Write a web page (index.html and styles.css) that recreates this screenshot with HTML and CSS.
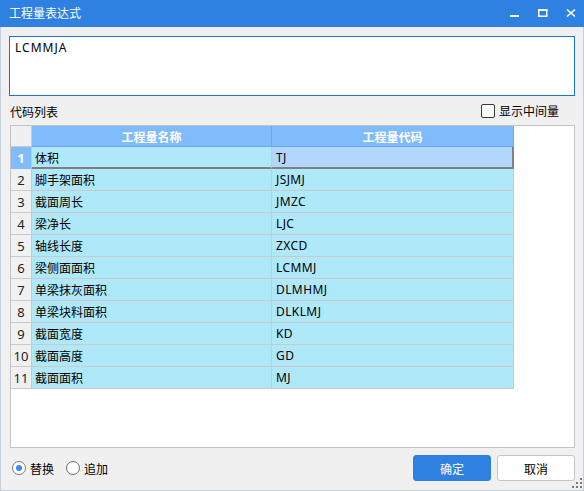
FILE: index.html
```html
<!DOCTYPE html>
<html>
<head>
<meta charset="utf-8">
<link rel="stylesheet" href="styles.css">
</head>
<body>
<div class="window">
  <div class="titlebar">
    <span class="title">工程量表达式</span>
    <div class="controls">
      <span class="ctl"><svg width="10" height="10" viewBox="0 0 10 10"><rect x="0" y="7" width="9" height="2" fill="#fff"/></svg></span>
      <span class="ctl"><svg width="10" height="10" viewBox="0 0 10 10"><rect x="0.75" y="1.75" width="8" height="6.5" fill="none" stroke="#fff" stroke-width="1.5"/><rect x="0" y="1" width="9.5" height="2" fill="#fff"/></svg></span>
      <span class="ctl"><svg width="10" height="10" viewBox="0 0 10 10"><path d="M1 1.5L9 8.5M9 1.5L1 8.5" stroke="#fff" stroke-width="1.6"/></svg></span>
    </div>
  </div>
  <div class="body">
    <div class="expr">LCMMJA</div>
    <div class="labelrow">
      <span class="label">代码列表</span>
      <label class="check"><span class="box"></span><span>显示中间量</span></label>
    </div>
    <div class="grid">
      <div class="row head">
        <div class="c num"></div>
        <div class="c name">工程量名称</div>
        <div class="c code">工程量代码</div>
      </div>
      <div class="row sel">
        <div class="c num">1</div>
        <div class="c name">体积</div>
        <div class="c code">TJ</div>
      </div>
      <div class="row"><div class="c num">2</div><div class="c name">脚手架面积</div><div class="c code">JSJMJ</div></div>
      <div class="row"><div class="c num">3</div><div class="c name">截面周长</div><div class="c code">JMZC</div></div>
      <div class="row"><div class="c num">4</div><div class="c name">梁净长</div><div class="c code">LJC</div></div>
      <div class="row"><div class="c num">5</div><div class="c name">轴线长度</div><div class="c code">ZXCD</div></div>
      <div class="row"><div class="c num">6</div><div class="c name">梁侧面面积</div><div class="c code">LCMMJ</div></div>
      <div class="row"><div class="c num">7</div><div class="c name">单梁抹灰面积</div><div class="c code">DLMHMJ</div></div>
      <div class="row"><div class="c num">8</div><div class="c name">单梁块料面积</div><div class="c code">DLKLMJ</div></div>
      <div class="row"><div class="c num">9</div><div class="c name">截面宽度</div><div class="c code">KD</div></div>
      <div class="row"><div class="c num">10</div><div class="c name">截面高度</div><div class="c code">GD</div></div>
      <div class="row"><div class="c num">11</div><div class="c name">截面面积</div><div class="c code">MJ</div></div>
    </div>
    <div class="footer">
      <label class="radio"><span class="dot on"></span><span>替换</span></label>
      <label class="radio"><span class="dot"></span><span>追加</span></label>
      <div class="buttons">
        <button class="btn primary">确定</button>
        <button class="btn">取消</button>
      </div>
    </div>
    <svg class="grip" width="11" height="11" viewBox="0 0 11 11">
      <rect x="8" y="0" width="2" height="2" fill="#7a7a7a"/>
      <rect x="4" y="4" width="2" height="2" fill="#7a7a7a"/>
      <rect x="8" y="4" width="2" height="2" fill="#7a7a7a"/>
      <rect x="0" y="8" width="2" height="2" fill="#7a7a7a"/>
      <rect x="4" y="8" width="2" height="2" fill="#7a7a7a"/>
      <rect x="8" y="8" width="2" height="2" fill="#7a7a7a"/>
    </svg>
  </div>
</div>
</body>
</html>
```
FILE: styles.css
```css
* { box-sizing: border-box; }
html, body { margin: 0; padding: 0; }
body {
  width: 584px;
  height: 491px;
  overflow: hidden;
  font-family: "Noto Sans", "Noto Sans CJK SC", sans-serif;
  font-size: 12px;
  color: #000;
  background: #f0f0f0;
}
.window {
  width: 584px;
  height: 491px;
  display: flex;
  flex-direction: column;
}
.titlebar {
  height: 27px;
  flex: none;
  background: #2e80e1;
  color: #fff;
  display: flex;
  align-items: center;
  padding-left: 9px;
}
.title {
  font-family: "Noto Sans CJK SC", sans-serif;
  font-size: 12px;
  line-height: 12px;
  margin-top: -1px;
}
.controls {
  margin-left: auto;
  display: flex;
  height: 27px;
}
.ctl {
  width: 28px;
  height: 27px;
  display: flex;
  align-items: center;
  justify-content: center;
  padding-left: 1px;
}
.ctl svg { display: block; margin-top: -2px; }
.body {
  position: relative;
  flex: 1;
  border: 1px solid #c7cedb;
  border-top: none;
  background: #f0f0f0;
  padding: 9px 8px 0 8px;
  display: flex;
  flex-direction: column;
}
.expr {
  height: 60px;
  background: #fff;
  border: 1px solid #1a76d4;
  padding: 3px 5px;
  font-family: "Noto Sans", sans-serif;
  font-size: 12px;
  letter-spacing: 1px;
  line-height: 16px;
  flex: none;
}
.labelrow {
  height: 29px;
  display: flex;
  align-items: center;
  flex: none;
  padding-left: 1px;
}
.label {
  font-family: "Noto Sans CJK SC", sans-serif;
  margin-top: 1px;
}
.check {
  margin-left: auto;
  display: flex;
  align-items: center;
  gap: 4px;
  margin-right: 16px;
  font-family: "Noto Sans CJK SC", sans-serif;
}
.box {
  width: 14px;
  height: 14px;
  border: 1px solid #3a3a3a;
  border-radius: 2px;
  background: #fff;
}
.grid {
  height: 323px;
  flex: none;
  background: #fff;
  border: 1px solid #c4c4c4;
  margin-left: 1px;
  margin-right: 0;
}
.row {
  display: grid;
  grid-template-columns: 21px 240px 242px;
  height: 22px;
}
.c {
  border-right: 1px solid #cacaca;
  border-bottom: 1px solid #cacaca;
  background: #afe9f9;
  display: flex;
  align-items: center;
  padding-left: 3px;
  font-family: "Noto Sans CJK SC", sans-serif;
  white-space: nowrap;
  overflow: hidden;
}
.c.code {
  font-family: "Noto Sans", sans-serif;
  padding-left: 4px;
  letter-spacing: 0.4px;
}
.c.num {
  background: #f0f0f0;
  justify-content: center;
  padding-left: 0;
  font-family: "Noto Sans", sans-serif;
  font-size: 13px;
  color: #222;
  border-right-color: #c8c8c8;
}
.head { height: 21px; }
.head .c {
  background: #80bcfc;
  color: #fff;
  font-weight: bold;
  justify-content: center;
  padding-left: 0;
  letter-spacing: 0;
  border-right-color: #6ea8ec;
  border-bottom-color: #6aa6ec;
  font-family: "Noto Sans CJK SC", sans-serif;
}
.head .c.num {
  background: #f0f0f0;
  border-right-color: #cacaca;
  border-bottom-color: #cacaca;
}
.sel .c.num {
  background: #80bcfc;
  color: #fff;
  font-weight: bold;
  border-bottom-color: #80bcfc;
}
.sel .c.name {
  border-bottom: 2px solid #808080;
}
.sel .c.code {
  background: #b1d7ff;
  border-bottom: 2px solid #808080;
  border-right: 2px solid #808080;
}
.footer {
  flex: 1;
  display: flex;
  align-items: flex-start;
  padding-top: 7px;
}
.radio {
  display: flex;
  align-items: center;
  gap: 4px;
  height: 26px;
  margin-right: 12px;
  font-family: "Noto Sans CJK SC", sans-serif;
}
.radio:first-child { margin-left: 3px; }
.dot {
  width: 14px;
  height: 14px;
  border-radius: 50%;
  border: 1px solid #6a6a6a;
  background: #fff;
  position: relative;
}
.dot.on { border-color: #7a7a7a; }
.dot.on::after {
  content: "";
  position: absolute;
  left: 3px;
  top: 3px;
  width: 6px;
  height: 6px;
  border-radius: 50%;
  background: #3a8cf0;
}
.buttons {
  margin-left: auto;
  display: flex;
  gap: 6px;
}
.btn {
  width: 78px;
  height: 26px;
  border: 1px solid #c6c6c6;
  border-radius: 3px;
  background: #fff;
  color: #000;
  font-family: "Noto Sans CJK SC", sans-serif;
  font-size: 12px;
  padding: 0;
}
.btn.primary {
  background: #2e80e1;
  border-color: #2e80e1;
  color: #fff;
}
.grip {
  position: absolute;
  right: 0;
  bottom: 1px;
}
```
